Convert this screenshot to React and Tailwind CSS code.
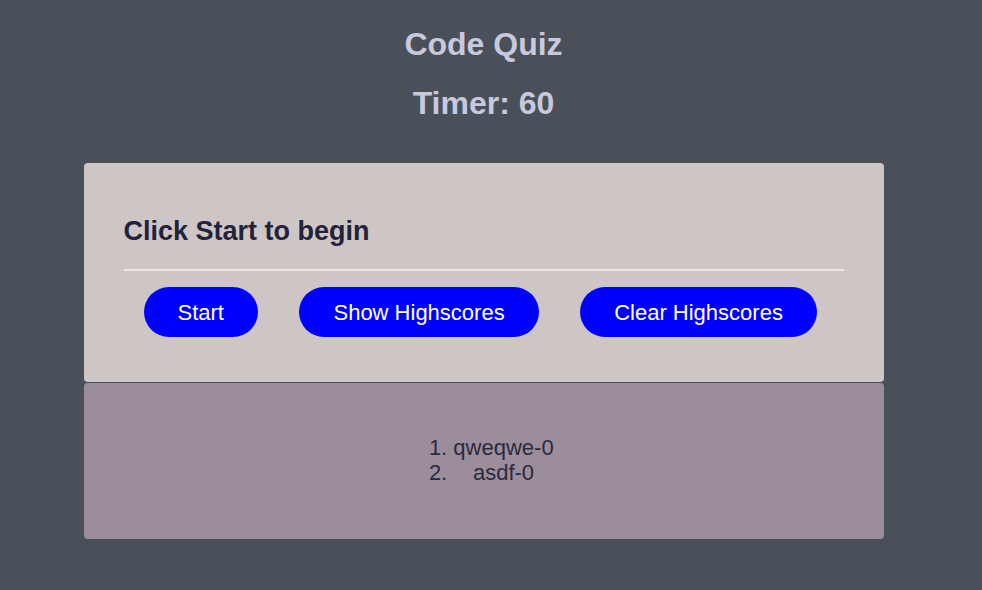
export default function App() {
    const scores = [
        { name: 'qweqwe', score: 0 },
        { name: 'asdf', score: 0 }
    ];

    return (
        <div className="min-h-[590px] w-full bg-[#4a5059] font-['Liberation_Sans',Arial,sans-serif]">
            <div className="w-[967px] pt-[26px] pb-[52px]">
                <h1 className="text-center text-[32px] leading-[37px] font-bold text-[#c9c9de]">Code Quiz</h1>
                <h2 className="mt-[22px] text-center text-[32px] leading-[37px] font-bold text-[#c9c9de]">Timer: 60</h2>

                <div className="mx-auto mt-[41px] w-[800px]">
                    <div className="rounded-[4px] bg-[#cec6c5] px-10 pt-[54px] pb-[45px]">
                        <h3 className="text-[27px] leading-[28px] font-bold text-[#22223b]">Click Start to begin</h3>
                        <div className="mt-6 h-[2px] bg-[#ebe7e7]"></div>
                        <div className="mt-4 flex">
                            <button className="ml-5 mr-[20.5px] h-[50px] rounded-full bg-[#0000ff] px-[34px] text-[22px] text-white">
                                Start
                            </button>
                            <button className="mx-[20.5px] h-[50px] rounded-full bg-[#0000ff] px-[34.5px] text-[22px] text-white">
                                Show Highscores
                            </button>
                            <button className="mx-[20.5px] h-[50px] rounded-full bg-[#0000ff] px-[34px] text-[22px] text-white">
                                Clear Highscores
                            </button>
                        </div>
                    </div>
                    <div className="mt-px rounded-[4px] bg-[#9c8d9a] pt-[52px] pb-[52px] text-center">
                        <ol className="inline-block list-decimal pl-10 text-center text-[22px] leading-[25px] text-[#2a2a40]">
                            {scores.map((s) => (
                                <li key={s.name}>{s.name}-{s.score}</li>
                            ))}
                        </ol>
                    </div>
                </div>
            </div>
        </div>
    );
}
